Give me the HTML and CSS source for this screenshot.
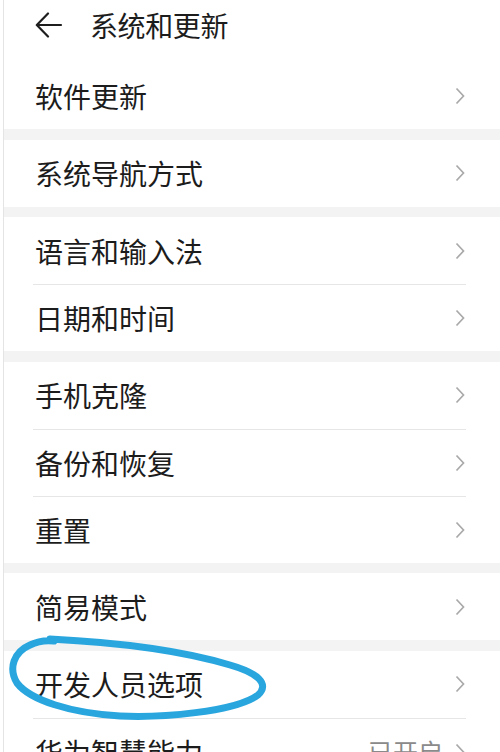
FILE: index.html
```html
<!DOCTYPE html>
<html lang="zh-CN">
<head>
<meta charset="utf-8">
<title>系统和更新</title>
<link rel="stylesheet" href="styles.css">
</head>
<body>
<div class="page">
  <div class="header">
    <svg class="back" width="28" height="26" viewBox="0 0 28 26">
      <path d="M26 13 H2 M13 1.5 L1.8 13 L13 24.5" fill="none" stroke="#1e1e1e" stroke-width="2.2" stroke-linecap="round" stroke-linejoin="round"/>
    </svg>
    <span class="title">系统和更新</span>
  </div>
  <div class="list">
    <div class="group">
      <div class="item"><span class="label">软件更新</span><svg class="chev" width="10" height="18" viewBox="0 0 10 18"><path d="M1.5 1.5 L8.5 9 L1.5 16.5" fill="none" stroke="#a9a9a9" stroke-width="1.7"/></svg></div>
    </div>
    <div class="group">
      <div class="item"><span class="label">系统导航方式</span><svg class="chev" width="10" height="18" viewBox="0 0 10 18"><path d="M1.5 1.5 L8.5 9 L1.5 16.5" fill="none" stroke="#a9a9a9" stroke-width="1.7"/></svg></div>
    </div>
    <div class="group">
      <div class="item"><span class="label">语言和输入法</span><svg class="chev" width="10" height="18" viewBox="0 0 10 18"><path d="M1.5 1.5 L8.5 9 L1.5 16.5" fill="none" stroke="#a9a9a9" stroke-width="1.7"/></svg></div>
      <div class="item"><span class="label">日期和时间</span><svg class="chev" width="10" height="18" viewBox="0 0 10 18"><path d="M1.5 1.5 L8.5 9 L1.5 16.5" fill="none" stroke="#a9a9a9" stroke-width="1.7"/></svg></div>
    </div>
    <div class="group">
      <div class="item"><span class="label">手机克隆</span><svg class="chev" width="10" height="18" viewBox="0 0 10 18"><path d="M1.5 1.5 L8.5 9 L1.5 16.5" fill="none" stroke="#a9a9a9" stroke-width="1.7"/></svg></div>
      <div class="item"><span class="label">备份和恢复</span><svg class="chev" width="10" height="18" viewBox="0 0 10 18"><path d="M1.5 1.5 L8.5 9 L1.5 16.5" fill="none" stroke="#a9a9a9" stroke-width="1.7"/></svg></div>
      <div class="item"><span class="label">重置</span><svg class="chev" width="10" height="18" viewBox="0 0 10 18"><path d="M1.5 1.5 L8.5 9 L1.5 16.5" fill="none" stroke="#a9a9a9" stroke-width="1.7"/></svg></div>
    </div>
    <div class="group">
      <div class="item"><span class="label">简易模式</span><svg class="chev" width="10" height="18" viewBox="0 0 10 18"><path d="M1.5 1.5 L8.5 9 L1.5 16.5" fill="none" stroke="#a9a9a9" stroke-width="1.7"/></svg></div>
    </div>
    <div class="group">
      <div class="item"><span class="label">开发人员选项</span><svg class="chev" width="10" height="18" viewBox="0 0 10 18"><path d="M1.5 1.5 L8.5 9 L1.5 16.5" fill="none" stroke="#a9a9a9" stroke-width="1.7"/></svg></div>
      <div class="item"><span class="label">华为智慧能力</span><span class="value">已开启</span><svg class="chev" width="10" height="18" viewBox="0 0 10 18"><path d="M1.5 1.5 L8.5 9 L1.5 16.5" fill="none" stroke="#a9a9a9" stroke-width="1.7"/></svg></div>
    </div>
  </div>
</div>
<svg class="mark" width="500" height="752" viewBox="0 0 500 752">
  <path d="M50 639 C110 642 180 650 230 665 C258 673 270 684 258 695 C235 712 160 718 120 716 C70 713 30 700 17 683 C8 668 14 652 30 645 C38 641 45 640 54 641" fill="none" stroke="#2aa6df" stroke-width="7" stroke-linecap="round" stroke-linejoin="round"/>
</svg>
</body>
</html>
```

FILE: styles.css
```css
html, body {
  margin: 0;
  padding: 0;
  background: #ffffff;
}
body {
  width: 500px;
  height: 752px;
  overflow: hidden;
  position: relative;
  font-family: "Noto Sans CJK SC", "Noto Sans", sans-serif;
  color: #1c1c1c;
}
.page {
  margin-left: 3px;
  border-left: 1px solid #e4e4e4;
  height: 752px;
}
.header {
  height: 50px;
  padding-bottom: 12px;
  display: flex;
  align-items: center;
}
.back {
  margin-left: 31px;
  margin-right: 27px;
  display: block;
}
.title {
  font-size: 28px;
  line-height: 1;
  letter-spacing: -0.4px;
}
.list {
  display: flex;
  flex-direction: column;
  gap: 10.6px;
  background: #f3f3f3;
}
.group {
  background: #ffffff;
}
.item {
  height: 67px;
  margin: 0 34px 0 29px;
  padding: 0 1px 0 2px;
  display: flex;
  align-items: center;
  box-sizing: border-box;
}
.item + .item {
  border-top: 1px solid #e6e6e6;
}
.label {
  font-size: 28px;
  line-height: 1;
  flex: 1;
}
.value {
  font-size: 25px;
  line-height: 1;
  color: #8a8a8a;
  margin-right: 12px;
}
.chev {
  display: block;
}
.mark {
  position: absolute;
  left: 0;
  top: 0;
  pointer-events: none;
}
```
